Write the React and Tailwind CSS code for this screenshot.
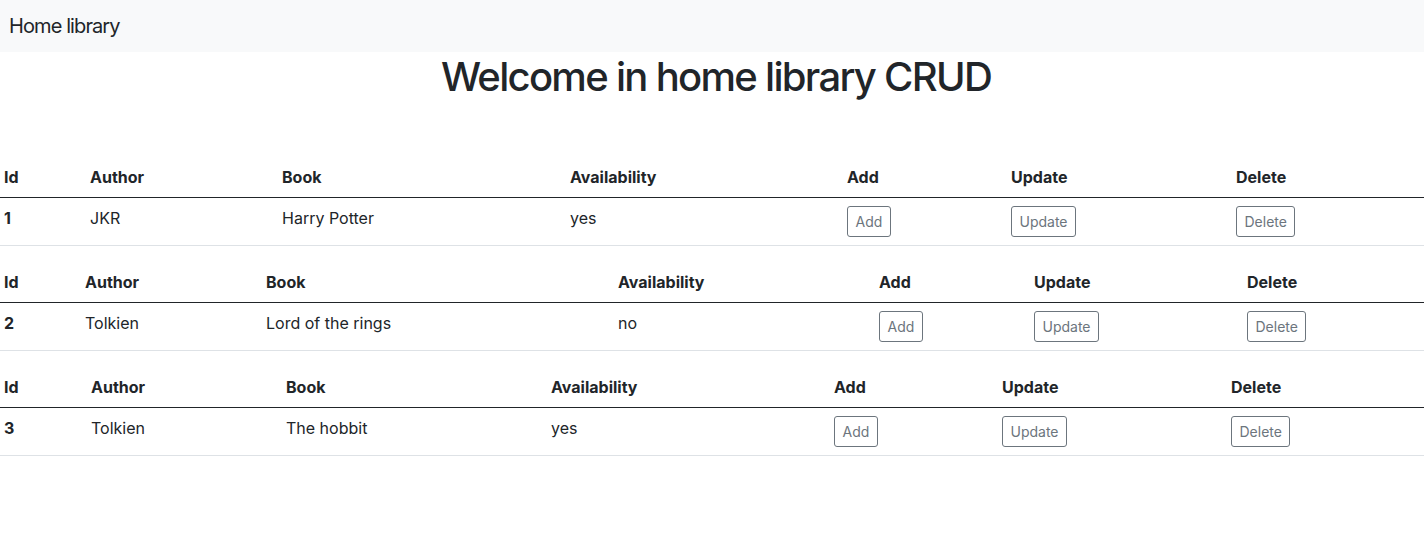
const books = [
    { id: 1, author: "JKR", book: "Harry Potter", available: "yes", cols: [86, 192, 288, 277, 164, 225, 192] },
    { id: 2, author: "Tolkien", book: "Lord of the rings", available: "no", cols: [81, 181, 352, 261, 155, 213, 181] },
    { id: 3, author: "Tolkien", book: "The hobbit", available: "yes", cols: [87, 195, 265, 283, 168, 229, 197] },
];

const headers = ["Id", "Author", "Book", "Availability", "Add", "Update", "Delete"];

function ActionButton({ label }) {
    return (
        <button className="h-[31px] px-[7.5px] border border-[#6c757d] rounded-[3px] text-[14px] leading-[20px] text-[#6c757d] bg-white">
            {label}
        </button>
    );
}

function BookTable({ item }) {
    return (
        <table className="w-full table-fixed border-collapse mb-4 text-[16px] text-[#212529]">
            <colgroup>
                {item.cols.map((w, i) => (
                    <col key={i} style={{ width: w }} />
                ))}
            </colgroup>
            <thead>
                <tr className="border-b border-[#212529]">
                    {headers.map(h => (
                        <th key={h} className="text-left font-bold pl-[4px] py-2 leading-6">
                            {h}
                        </th>
                    ))}
                </tr>
            </thead>
            <tbody>
                <tr className="border-b border-[#dee2e6] align-top">
                    <th className="text-left font-bold pl-[4px] py-2 leading-6">{item.id}</th>
                    <td className="pl-[4px] py-2 leading-6">{item.author}</td>
                    <td className="pl-[4px] py-2 leading-6">{item.book}</td>
                    <td className="pl-[4px] py-2 leading-6">{item.available}</td>
                    <td className="pl-[4px] py-2"><ActionButton label="Add" /></td>
                    <td className="pl-[4px] py-2"><ActionButton label="Update" /></td>
                    <td className="pl-[4px] py-2"><ActionButton label="Delete" /></td>
                </tr>
            </tbody>
        </table>
    );
}

export default function App() {
    return (
        <div className="min-h-screen bg-white text-[#212529]" style={{ fontFamily: "Inter, 'Noto Sans', sans-serif" }}>
            {/* navbar */}
            <nav className="h-[52px] bg-[#f8f9fa] flex items-center px-[9px]">
                <span className="text-[20px] leading-[30px] tracking-[-0.9px]">Home library</span>
            </nav>

            <h1 className="text-center text-[40px] leading-[48px] font-medium tracking-[-1.7px] pl-[8px] mt-[1px] mb-[56px]">
                Welcome in home library CRUD
            </h1>

            {books.map(b => (
                <BookTable key={b.id} item={b} />
            ))}
        </div>
    );
}
